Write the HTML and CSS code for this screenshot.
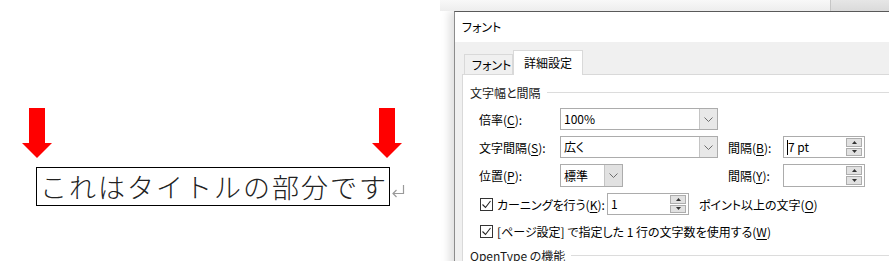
FILE: index.html
```html
<!DOCTYPE html>
<html lang="ja">

<head>
    <meta charset="UTF-8">
    <meta name="viewport" content="width=device-width, initial-scale=1.0">
    <title>フォント</title>
    <link rel="stylesheet" href="styles.css">
</head>

<body>
    <!-- Document side -->
    <div class="doc">
        <div class="arrows">
            <svg class="arrow" width="30" height="50" viewBox="0 0 30 50">
                <rect x="7" y="0" width="16" height="36" fill="#ff0000" />
                <polygon points="0,35 30,35 15,50" fill="#ff0000" />
            </svg>
            <svg class="arrow" width="30" height="50" viewBox="0 0 30 50">
                <rect x="7" y="0" width="16" height="36" fill="#ff0000" />
                <polygon points="0,35 30,35 15,50" fill="#ff0000" />
            </svg>
        </div>
        <div class="title-line">
            <span class="title-box">これはタイトルの部分です</span>
            <svg class="return-mark" width="14" height="14" viewBox="0 0 14 14">
                <path d="M12.5 1 V9.5 H2" fill="none" stroke="#9a9a9a" stroke-width="1.2" />
                <path d="M5.5 6 L2 9.5 L5.5 13" fill="none" stroke="#9a9a9a" stroke-width="1.2" />
            </svg>
        </div>
    </div>

    <!-- Dialog side -->
    <div class="desk">
        <div class="back-window">
            <div class="back-left"></div>
            <div class="back-right"></div>
        </div>
        <div class="dialog">
            <div class="dialog-title">フォント</div>
            <div class="dialog-body">
                <div class="tabs">
                    <div class="tab">フォント</div>
                    <div class="tab active">詳細設定</div>
                </div>
                <div class="panel">
                    <div class="group-title"><span>文字幅と間隔</span></div>
                    <div class="rows">
                        <div class="form-row">
                            <span class="label">倍率(<u>C</u>):</span>
                            <div class="combo wide">
                                <span class="value">100%</span>
                                <span class="drop"><svg width="9" height="5" viewBox="0 0 9 5"><path d="M0.5 0.5 L4.5 4.5 L8.5 0.5" fill="none" stroke="#6d6d6d" /></svg></span>
                            </div>
                        </div>
                        <div class="form-row">
                            <span class="label">文字間隔(<u>S</u>):</span>
                            <div class="combo wide">
                                <span class="value">広く</span>
                                <span class="drop"><svg width="9" height="5" viewBox="0 0 9 5"><path d="M0.5 0.5 L4.5 4.5 L8.5 0.5" fill="none" stroke="#6d6d6d" /></svg></span>
                            </div>
                            <span class="label small">間隔(<u>B</u>):</span>
                            <div class="spin">
                                <span class="value"><span class="caret"></span>7 pt</span>
                                <span class="spin-buttons">
                                    <span class="spin-btn"><svg width="5" height="3" viewBox="0 0 5 3"><polygon points="0,3 5,3 2.5,0" fill="#333" /></svg></span>
                                    <span class="spin-btn"><svg width="5" height="3" viewBox="0 0 5 3"><polygon points="0,0 5,0 2.5,3" fill="#333" /></svg></span>
                                </span>
                            </div>
                        </div>
                        <div class="form-row tall">
                            <span class="label">位置(<u>P</u>):</span>
                            <div class="combo narrow">
                                <span class="value">標準</span>
                                <span class="drop list"><svg width="9" height="5" viewBox="0 0 9 5"><path d="M0.5 0.5 L4.5 4.5 L8.5 0.5" fill="none" stroke="#6d6d6d" /></svg></span>
                            </div>
                            <span class="label small far">間隔(<u>Y</u>):</span>
                            <div class="spin">
                                <span class="value"></span>
                                <span class="spin-buttons">
                                    <span class="spin-btn"><svg width="5" height="3" viewBox="0 0 5 3"><polygon points="0,3 5,3 2.5,0" fill="#333" /></svg></span>
                                    <span class="spin-btn"><svg width="5" height="3" viewBox="0 0 5 3"><polygon points="0,0 5,0 2.5,3" fill="#333" /></svg></span>
                                </span>
                            </div>
                        </div>
                        <div class="form-row">
                            <span class="check"><svg width="11" height="11" viewBox="0 0 11 11"><path d="M1.5 5.5 L4.5 8.5 L9.5 2" fill="none" stroke="#222" stroke-width="1.1" /></svg></span>
                            <span class="check-label kern">カーニングを行う(<u>K</u>):</span>
                            <div class="spin">
                                <span class="value">1</span>
                                <span class="spin-buttons">
                                    <span class="spin-btn"><svg width="5" height="3" viewBox="0 0 5 3"><polygon points="0,3 5,3 2.5,0" fill="#333" /></svg></span>
                                    <span class="spin-btn"><svg width="5" height="3" viewBox="0 0 5 3"><polygon points="0,0 5,0 2.5,3" fill="#333" /></svg></span>
                                </span>
                            </div>
                            <span class="after">ポイント以上の文字(<u>O</u>)</span>
                        </div>
                        <div class="form-row">
                            <span class="check"><svg width="11" height="11" viewBox="0 0 11 11"><path d="M1.5 5.5 L4.5 8.5 L9.5 2" fill="none" stroke="#222" stroke-width="1.1" /></svg></span>
                            <span class="check-label">[ページ設定] で指定した 1 行の文字数を使用する(<u>W</u>)</span>
                        </div>
                    </div>
                    <div class="group-title second"><span>OpenType の機能</span></div>
                </div>
            </div>
        </div>
    </div>
</body>

</html>
```

FILE: styles.css
```css
body {
    margin: 0;
    display: flex;
    height: 261px;
    overflow: hidden;
    background-color: #ffffff;
}

/* document side */
.doc {
    width: 440px;
    flex-shrink: 0;
    padding: 108px 0 0 22px;
    box-sizing: border-box;
}

.arrows {
    display: flex;
    justify-content: space-between;
    width: 380px;
}

.arrow {
    display: block;
}

.title-line {
    display: flex;
    align-items: center;
    margin: 9px 0 0 14px;
}

.title-box {
    border: 1px solid #000;
    height: 37px;
    line-height: 37px;
    padding: 0 1px 0 3px;
    font-family: "Noto Sans CJK JP", sans-serif;
    font-weight: 300;
    font-size: 27px;
    letter-spacing: 2px;
    color: #222;
    white-space: nowrap;
}

.return-mark {
    margin: 8px 0 0 1px;
}

/* dialog side */
.desk {
    flex: 1;
    min-width: 0;
    overflow: hidden;
}

.back-window {
    display: flex;
    height: 11px;
}

.back-left {
    width: 390px;
    background: linear-gradient(#f8f8f8, #ededed);
}

.back-right {
    flex: 1;
    background: linear-gradient(#e6e6e6, #dadada);
    border-left: 1px solid #c6c6c6;
}

.dialog {
    margin-left: 14px;
    width: 470px;
    height: 260px;
    border-top: 1px solid #595959;
    border-left: 1px solid #8c8c8c;
    box-shadow: -5px 0 8px rgba(0, 0, 0, 0.12);
    font-family: "Noto Sans CJK JP", sans-serif;
    font-feature-settings: "palt";
    font-size: 12px;
    color: #000;
}

.dialog-title {
    height: 30px;
    line-height: 30px;
    padding-left: 7px;
    background-color: #fff;
}

.dialog-body {
    background-color: #f0f0f0;
    padding: 8px 0 0 7px;
    height: 220px;
}

.tabs {
    display: flex;
    align-items: flex-end;
    height: 24px;
}

.tab {
    height: 20px;
    line-height: 19px;
    padding-left: 7px;
    margin-left: 2px;
    border: 1px solid #d9d9d9;
    border-bottom: none;
    background-color: #f0f0f0;
    box-sizing: border-box;
    width: 49px;
    white-space: nowrap;
}

.tab.active {
    margin-left: 0;
    width: 70px;
    height: 25px;
    line-height: 23px;
    padding-left: 10px;
    background-color: #fff;
    position: relative;
    z-index: 1;
    margin-bottom: -1px;
}

.panel {
    background-color: #fff;
    border: 1px solid #d9d9d9;
    height: 200px;
    padding-left: 7px;
}

.group-title {
    display: flex;
    align-items: center;
    height: 16px;
    margin-top: 9px;
    color: #1a1a1a;
}

.group-title::after {
    content: "";
    flex: 1;
    height: 1px;
    margin-left: 6px;
    background-color: #dcdcdc;
}

.group-title.second {
    margin-top: 5px;
}

.rows {
    display: flex;
    flex-direction: column;
    gap: 6px;
    margin-top: 8px;
    padding-left: 9px;
}

.form-row {
    display: flex;
    align-items: center;
    height: 22px;
}

.form-row.tall {
    height: 23px;
}

.form-row:last-child {
    margin-top: -1px;
}

.label {
    width: 81px;
    flex-shrink: 0;
    white-space: nowrap;
}

.label.small {
    width: 55px;
    margin-left: 10px;
}

.label.far {
    margin-left: 105px;
}

.combo,
.spin {
    display: flex;
    height: 100%;
    border: 1px solid #acacac;
    box-sizing: border-box;
    background-color: #fff;
    flex-shrink: 0;
}

.combo.wide {
    width: 158px;
}

.combo.narrow {
    width: 63px;
}

.value {
    flex: 1;
    padding-left: 3px;
    line-height: 20px;
    white-space: nowrap;
    display: flex;
    align-items: center;
}

.caret {
    display: inline-block;
    width: 1px;
    height: 15px;
    background-color: #000;
    margin-right: 0;
}

.drop {
    width: 17px;
    border-left: 1px solid #c4c4c4;
    background-color: #e8e8e8;
    display: flex;
    align-items: center;
    justify-content: center;
}

.drop.list {
    background-color: #e1e1e1;
}

.spin {
    width: 82px;
}

.spin-buttons {
    display: flex;
    flex-direction: column;
    justify-content: center;
    gap: 1px;
    padding: 1px 2px 1px 0;
}

.spin-btn {
    width: 14px;
    height: 8px;
    background-color: #e1e1e1;
    border: 1px solid #adadad;
    display: flex;
    align-items: center;
    justify-content: center;
}

.spin-btn svg {
    display: block;
}

.check {
    width: 11px;
    height: 11px;
    border: 1px solid #333;
    margin-left: 1px;
    background-color: #fff;
    display: flex;
    flex-shrink: 0;
}

.check-label {
    margin-left: 4px;
    white-space: nowrap;
}

.check-label.kern {
    width: 110px;
    flex-shrink: 0;
}

.after {
    margin-left: 10px;
    white-space: nowrap;
}

u {
    text-underline-offset: 2px;
}
```
